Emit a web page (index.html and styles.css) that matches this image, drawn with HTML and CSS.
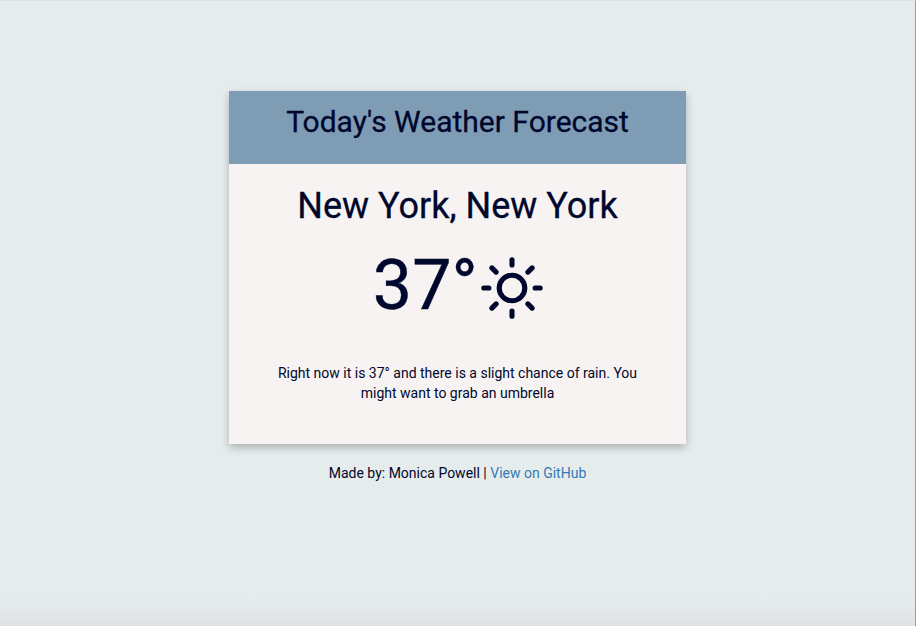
FILE: index.html
```html
<!DOCTYPE html>
<html lang="en">
<head>
<meta charset="utf-8">
<title>Today's Weather Forecast</title>
<link rel="stylesheet" href="styles.css">
</head>
<body>
<main class="card">
  <header class="card-header"><h1>Today's Weather Forecast</h1></header>
  <section class="card-body">
    <h2 class="city">New York, New York</h2>
    <div class="reading">
      <span class="temp">37°</span>
      <svg class="sun" viewBox="0 0 64 64" fill="none" stroke="currentColor" stroke-width="5.1" stroke-linecap="round">
        <circle cx="32" cy="32" r="12.8"/>
        <path d="M32 3.8v5.1M32 55.1v5.1M3.8 32h5.1M55.1 32h5.1M11.9 11.9l4.2 4.2M47.9 47.9l4.2 4.2M52.1 11.9l-4.2 4.2M16.1 47.9l-4.2 4.2"/>
      </svg>
    </div>
    <p class="summary">Right now it is 37° and there is a slight chance of rain. You might want to grab an umbrella</p>
  </section>
</main>
<footer class="credits">Made by: Monica Powell | <a href="#">View on GitHub</a></footer>
</body>
</html>
```
FILE: styles.css
```css
* { box-sizing: border-box; }
html { height: 100%; }
body {
  margin: 0;
  min-height: 100%;
  padding-top: 90px;
  border-top: 1px solid #dce1e1;
  border-right: 1px solid #9a9e9e;
  background: #e6ecec linear-gradient(to top, #dfe2e2, #e6ecec 28px) no-repeat;
  color: #00072d;
  font: 14px/20px Roboto, sans-serif;
}
h1, h2, p { margin: 0; font-weight: 400; }
.card {
  width: 457px;
  height: 353px;
  margin: 0 auto;
  background: #f7f3f2;
  box-shadow: 0 4px 8px rgba(0, 0, 0, .2), 0 2px 10px rgba(0, 0, 0, .06);
  text-align: center;
}
.card-header { height: 73px; padding-top: 14px; background: #7f9cb5; }
.card-header h1 { font-size: 30px; line-height: 34px; -webkit-text-stroke: .3px; }
.card-body { padding-top: 22px; }
.city { font-size: 36px; line-height: 40px; -webkit-text-stroke: .3px; }
.reading {
  display: flex;
  justify-content: center;
  height: 79px;
  margin-top: 20px;
  padding-left: 2px;
}
.temp { font-size: 70px; line-height: 79px; -webkit-text-stroke: .4px; }
.sun { width: 64px; height: 64px; margin: 9.8px 0 0 2.5px; }
.summary { width: 380px; margin: 38px auto 0; }
.credits { margin-top: 19px; text-align: center; }
.credits a { color: #337ab7; text-decoration: none; }
```
